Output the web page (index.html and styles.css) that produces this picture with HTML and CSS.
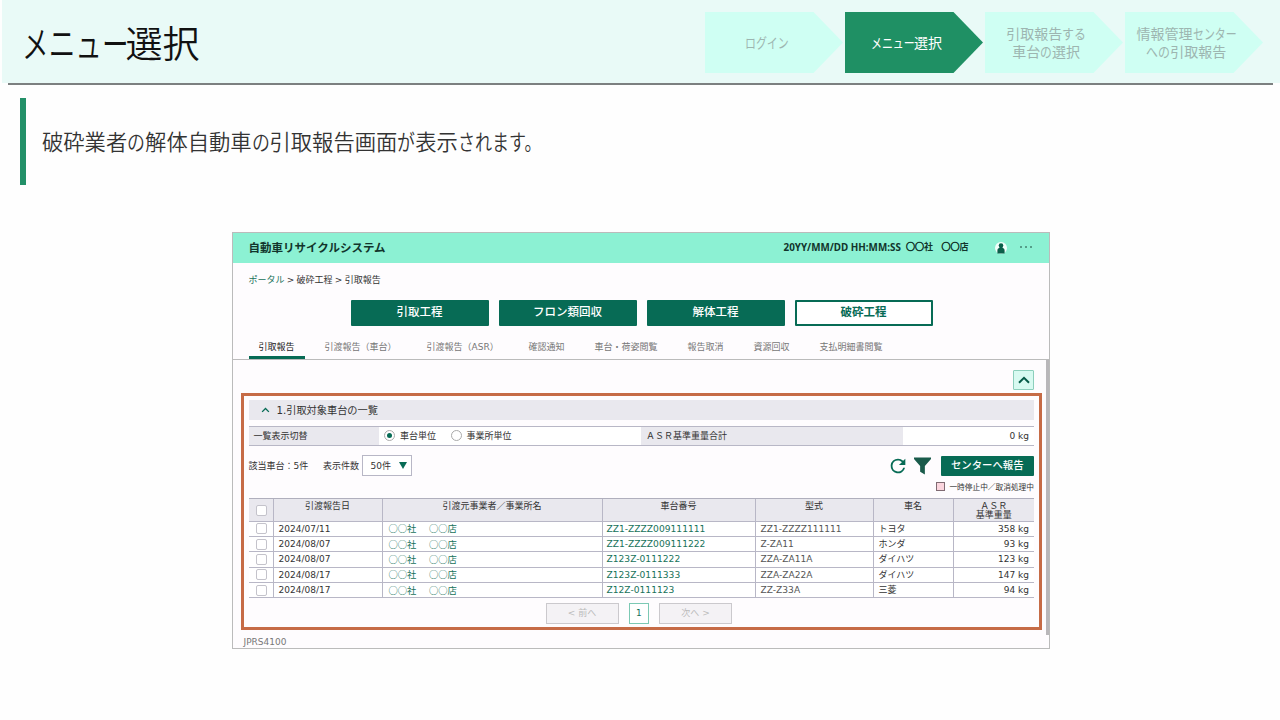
FILE: index.html
```html
<!DOCTYPE html>
<html lang="ja">
<head>
    <meta charset="UTF-8">
    <meta name="viewport" content="width=device-width, initial-scale=1.0">
    <title>メニュー選択</title>
    <link rel="stylesheet" href="styles.css">
</head>
<body>
    <header class="slide-header">
        <h1><span class="kana k4">メニュー</span>選択</h1>
        <ol class="steps">
            <li class="step"><span><span class="kana k4">ログイン</span></span></li>
            <li class="step active"><span><span class="kana k4">メニュー</span>選択</span></li>
            <li class="step"><span>引取報告<span class="kana k2">する</span><br>車台<span class="kana k1">の</span>選択</span></li>
            <li class="step"><span>情報管理<span class="kana k4">センター</span><br><span class="kana k2">への</span>引取報告</span></li>
        </ol>
    </header>

    <div class="lead">
        <p>破砕業者<span class="kana k1">の</span>解体自動車<span class="kana k1">の</span>引取報告画面<span class="kana k1">が</span>表示<span class="kana k5">されます。</span></p>
    </div>

    <div class="window">
        <div class="app-bar">
            <div class="app-title">自動車リサイクルシステム</div>
            <div class="app-time">20YY/MM/DD HH:MM:SS</div>
            <div class="app-company"><b>○○</b>社</div>
            <div class="app-shop"><b>○○</b>店</div>
            <svg class="user-icon" viewBox="0 0 12 12">
                <circle cx="6" cy="6" r="6" fill="#f2fffb"/>
                <circle cx="6" cy="3.6" r="2.3" fill="#0b5f4a"/>
                <path d="M4.600 5h2.800v.8c1.500.5 2.200 1.400 2.200 2.600V11.500H2.400V8.400c0-1.200.7-2.100 2.200-2.600z" fill="#0b5f4a"/>
            </svg>
            <svg class="more-icon" viewBox="0 0 12 4">
                <circle cx="1" cy="2" r=".8"/>
                <circle cx="6" cy="2" r=".8"/>
                <circle cx="11" cy="2" r=".8"/>
            </svg>
        </div>

        <div class="breadcrumb"><a>ポータル</a> &gt; 破砕工程 &gt; 引取報告</div>

        <div class="process">
            <div class="process-btn">引取工程</div>
            <div class="process-btn">フロン類回収</div>
            <div class="process-btn">解体工程</div>
            <div class="process-btn current">破砕工程</div>
        </div>

        <div class="tabs">
            <div class="tab current">引取報告</div>
            <div class="tab">引渡報告（車台）</div>
            <div class="tab tab-asr">引渡報告（ASR）</div>
            <div class="tab">確認通知</div>
            <div class="tab">車台・荷姿閲覧</div>
            <div class="tab">報告取消</div>
            <div class="tab">資源回収</div>
            <div class="tab">支払明細書閲覧</div>
        </div>

        <div class="page">
            <div class="content">
                <div class="top-row">
                    <div class="collapse">
                        <svg viewBox="0 0 12 8"><path d="M1 6.800L6 1.800L11 6.800"/></svg>
                    </div>
                </div>

                <section class="panel">
                    <div class="panel-title">
                        <svg viewBox="0 0 12 8"><path d="M1.500 6.500L6 2L10.500 6.500"/></svg>
                        <span>1.引取対象車台の一覧</span>
                    </div>

                    <div class="switch-row">
                        <div class="cell label-left">一覧表示切替</div>
                        <div class="cell radios">
                            <span class="radio on"></span><span class="radio-text">車台単位</span>
                            <span class="radio"></span><span class="radio-text">事業所単位</span>
                        </div>
                        <div class="cell label-right">ＡＳＲ基準重量合計</div>
                        <div class="cell total">0 kg</div>
                    </div>

                    <div class="tools">
                        <span class="count">該当車台：5件</span>
                        <span class="per-page">表示件数</span>
                        <div class="select">50件<i></i></div>
                        <svg class="reload" viewBox="0 0 24 24"><path d="M17.650 6.350A7.960 7.960 0 0 0 12 4a8 8 0 1 0 7.730 10h-2.080A6 6 0 1 1 12 6c1.660 0 3.140.690 4.220 1.780L13 11h7V4z"/></svg>
                        <svg class="filter" viewBox="0 0 18 18"><path d="M0 0h18v1.500L11.500 9v9L6.500 15V9L0 1.500z"/></svg>
                        <div class="report-btn">センターへ報告</div>
                    </div>

                    <div class="legend"><i></i><span>一時停止中／取消処理中</span></div>

                    <table class="list">
                        <colgroup>
                            <col class="c1"><col class="c2"><col class="c3"><col class="c4"><col class="c5"><col class="c6"><col class="c7">
                        </colgroup>
                        <thead>
                            <tr>
                                <th class="check-head"><span class="check"></span></th>
                                <th>引渡報告日</th>
                                <th>引渡元事業者／事業所名</th>
                                <th>車台番号</th>
                                <th>型式</th>
                                <th>車名</th>
                                <th>ＡＳＲ<br>基準重量</th>
                            </tr>
                        </thead>
                        <tbody>
                            <tr>
                                <td><span class="check"></span></td>
                                <td>2024/07/11</td>
                                <td class="link shop">○○社<span>○○店</span></td>
                                <td class="link">ZZ1-ZZZZ009111111</td>
                                <td class="model">ZZ1-ZZZZ111111</td>
                                <td>トヨタ</td>
                                <td class="weight">358 kg</td>
                            </tr>
                            <tr>
                                <td><span class="check"></span></td>
                                <td>2024/08/07</td>
                                <td class="link shop">○○社<span>○○店</span></td>
                                <td class="link">ZZ1-ZZZZ009111222</td>
                                <td class="model">Z-ZA11</td>
                                <td>ホンダ</td>
                                <td class="weight">93 kg</td>
                            </tr>
                            <tr>
                                <td><span class="check"></span></td>
                                <td>2024/08/07</td>
                                <td class="link shop">○○社<span>○○店</span></td>
                                <td class="link">Z123Z-0111222</td>
                                <td class="model">ZZA-ZA11A</td>
                                <td>ダイハツ</td>
                                <td class="weight">123 kg</td>
                            </tr>
                            <tr>
                                <td><span class="check"></span></td>
                                <td>2024/08/17</td>
                                <td class="link shop">○○社<span>○○店</span></td>
                                <td class="link">Z123Z-0111333</td>
                                <td class="model">ZZA-ZA22A</td>
                                <td>ダイハツ</td>
                                <td class="weight">147 kg</td>
                            </tr>
                            <tr>
                                <td><span class="check"></span></td>
                                <td>2024/08/17</td>
                                <td class="link shop">○○社<span>○○店</span></td>
                                <td class="link">Z12Z-0111123</td>
                                <td class="model">ZZ-Z33A</td>
                                <td>三菱</td>
                                <td class="weight">94 kg</td>
                            </tr>
                        </tbody>
                    </table>

                    <div class="pager">
                        <div class="pager-btn">&lt; 前へ</div>
                        <div class="pager-num">1</div>
                        <div class="pager-btn">次へ &gt;</div>
                    </div>
                </section>
            </div>
            <div class="scrollbar"></div>
        </div>

        <div class="screen-id">JPRS4100</div>
    </div>
</body>
</html>
```
FILE: styles.css
```css
* {
    box-sizing: border-box;
}

body {
    margin: 0;
    width: 1280px;
    height: 720px;
    overflow: hidden;
    background: #fefefe;
    color: #333;
    font-family: "Noto Sans CJK JP", sans-serif;
}

/* slide header */
.slide-header {
    display: flex;
    justify-content: space-between;
    height: 83px;
    margin-left: 2px;
    padding: 12px 17px 0 20px;
    background: #e9faf7;
}

.slide-header::after {
    content: "";
    position: absolute;
    left: 8px;
    top: 83px;
    width: 1265px;
    height: 2px;
    background: #7c8080;
}

h1 {
    margin: 0;
    padding-top: 1px;
    font-size: 37px;
    font-weight: 350;
    line-height: 58px;
    color: #111;
    white-space: nowrap;
}

/* narrow kana next to full width kanji */
.kana {
    display: inline-block;
    transform: scaleX(0.72);
    transform-origin: left;
    white-space: nowrap;
}

.k1 {
    width: 0.84em;
    transform: scaleX(0.84);
}

.k2 {
    width: 1.7em;
    transform: scaleX(0.85);
}

.k4 {
    width: 2.8em;
}

.step .k4 {
    width: 3.1em;
    transform: scaleX(0.78);
}

.k5 {
    width: 4em;
    transform: scaleX(0.8);
}

.steps {
    display: flex;
    gap: 1.5px;
    margin: 0;
    padding: 0;
    list-style: none;
}

.step {
    display: flex;
    align-items: center;
    justify-content: center;
    width: 138.5px;
    height: 61px;
    padding: 0 15px 2px 0;
    background: #cffff3;
    clip-path: polygon(0 0, 109px 0, 100% 50%, 109px 100%, 0 100%);
    color: #9db5b0;
    font-size: 14px;
    line-height: 18px;
    text-align: center;
    white-space: nowrap;
}

.step.active {
    background: #1f9064;
    color: #fff;
}

.lead {
    display: flex;
    align-items: center;
    width: 900px;
    height: 87px;
    margin: 15px 0 0 20px;
    padding: 0 0 2px 16px;
    border-left: 6px solid #239068;
}

.lead p {
    margin: 0;
    font-size: 21.3px;
    font-weight: 350;
    line-height: 30px;
    white-space: nowrap;
}

/* application window */
.window {
    width: 818px;
    height: 417px;
    margin: 46.500px 0 0 232px;
    border: 1px solid #bbb;
    background: #fefcfe;
    font-family: "DejaVu Sans", "Noto Sans CJK JP", sans-serif;
    font-size: 9px;
}

.app-bar {
    display: flex;
    align-items: center;
    height: 30px;
    padding: 0 0 2px 15.500px;
    background: #8cf1d3;
    color: #12352c;
    font-weight: bold;
    white-space: nowrap;
}

.app-title {
    width: 535px;
    font-size: 11.500px;
}

.app-time {
    width: 122.500px;
    font-family: "Noto Sans", sans-serif;
    font-size: 9.850px;
}

.app-company,
.app-shop {
    font-family: "Noto Sans CJK JP", sans-serif;
}

.app-company b,
.app-shop b {
    -webkit-text-stroke: 0.6px #12352c;
}

.app-company {
    width: 35.500px;
}

.app-shop {
    width: 53px;
}

.user-icon {
    width: 12px;
    height: 12px;
    margin-top: 2px;
}

.more-icon {
    width: 12px;
    height: 4px;
    margin-left: 13.500px;
    fill: #12352c;
}

.breadcrumb {
    height: 37px;
    padding: 8px 0 0 15.500px;
    line-height: 18px;
    word-spacing: -0.6px;
}

.breadcrumb a {
    color: #17725a;
}

.process {
    display: flex;
    gap: 10px;
    height: 37px;
    padding-left: 117.500px;
}

.process-btn {
    width: 138px;
    height: 26px;
    border: 2px solid #076b55;
    border-radius: 1px;
    background: #076b55;
    color: #fff;
    font-size: 11.500px;
    font-weight: 500;
    line-height: 20px;
    text-align: center;
}

.process-btn.current {
    background: #fff;
    color: #076b55;
    font-weight: bold;
}

.tabs {
    display: flex;
    gap: 10px;
    height: 23px;
    padding-left: 15.500px;
    border-bottom: 1px solid #bbb;
    color: #777;
    line-height: 20px;
    white-space: nowrap;
}

.tab {
    height: 22px;
    padding: 0 10px;
}

.tab.current {
    border-bottom: 3px solid #076b55;
    color: #222;
}

.tab-asr {
    width: 92px;
}

.page {
    display: flex;
    justify-content: space-between;
    height: 275px;
}

.content {
    width: 809px;
    padding-left: 8px;
}

.scrollbar {
    width: 3.500px;
    background: #b9b7ba;
}

.top-row {
    display: flex;
    justify-content: flex-end;
    height: 33px;
    padding: 10px 8px 0 0;
}

.collapse {
    display: flex;
    align-items: center;
    justify-content: center;
    width: 21px;
    height: 20px;
    border: 1px solid #8ccfbc;
    border-radius: 1px;
    background: #d8faf1;
}

.collapse svg {
    width: 12px;
    height: 8px;
    fill: none;
    stroke: #075b48;
    stroke-width: 2;
}

.panel {
    width: 801px;
    height: 237px;
    padding: 4px 5px 0 4.500px;
    border: 3px solid #c66b46;
}

.panel-title {
    display: flex;
    align-items: center;
    height: 20.500px;
    padding-left: 12px;
    background: #e9e8ee;
    font-size: 10.200px;
}

.panel-title svg {
    width: 9px;
    height: 6px;
    margin-right: 7px;
    fill: none;
    stroke: #076b55;
    stroke-width: 1.800;
}

.switch-row {
    display: flex;
    height: 20px;
    margin-top: 5.500px;
    border-top: 1px solid #b8b7c6;
    border-bottom: 1px solid #b8b7c6;
    background: #fff;
    line-height: 18px;
    white-space: nowrap;
}

.cell {
    flex: none;
}

.label-left {
    width: 130px;
    padding-left: 5px;
    background: #e9e8ee;
}

.radios {
    display: flex;
    align-items: center;
    width: 262.500px;
    padding-left: 5.500px;
}

.radio {
    display: flex;
    align-items: center;
    justify-content: center;
    width: 11px;
    height: 11px;
    border: 1px solid #aaa;
    border-radius: 50%;
    background: #fff;
}

.radio.on::after {
    content: "";
    width: 5px;
    height: 5px;
    border-radius: 50%;
    background: #076b55;
}

.radio-text {
    margin: 0 14.500px 0 5px;
}

.label-right {
    width: 262px;
    padding-left: 5px;
    background: #e9e8ee;
}

.total {
    width: 131px;
    padding-right: 5px;
    text-align: right;
}

.tools {
    display: flex;
    align-items: center;
    height: 20px;
    margin-top: 10px;
    white-space: nowrap;
}

.count {
    width: 74.500px;
}

.per-page {
    width: 38.500px;
}

.select {
    display: flex;
    align-items: center;
    width: 50.500px;
    height: 20.500px;
    padding-left: 8px;
    border: 1px solid #b8b7c6;
    background: #fff;
}

.select i {
    margin-left: 8.500px;
    border: 4px solid transparent;
    border-top: 7px solid #076b55;
    border-bottom: 0;
}

.reload {
    width: 22px;
    height: 22px;
    margin-left: auto;
    fill: #076b55;
}

.filter {
    width: 17px;
    height: 18px;
    margin: 0 10px 0 5px;
    fill: #1a5b4b;
}

.report-btn {
    width: 93.500px;
    height: 20px;
    border-radius: 1px;
    background: #076b55;
    color: #fff;
    font-size: 10.400px;
    font-weight: 500;
    line-height: 19px;
    text-align: center;
}

.legend {
    display: flex;
    align-items: center;
    justify-content: flex-end;
    height: 22px;
    font-size: 7.700px;
    white-space: nowrap;
}

.legend i {
    width: 9px;
    height: 9px;
    margin-right: 4px;
    border: 1px solid #806b73;
    background: #fbd5de;
}

/* vehicle list */
.list {
    width: 785.500px;
    border-collapse: separate;
    border-spacing: 0;
    border-top: 1px solid #b0afbd;
    table-layout: fixed;
    background: #fff;
}

.c1 { width: 25px; }
.c2 { width: 109px; }
.c3 { width: 220px; }
.c4 { width: 153px; }
.c5 { width: 118px; }
.c6 { width: 80px; }
.c7 { width: 80.500px; }

.list th,
.list td {
    padding: 0 5px;
    border-right: 1px solid #b8b7c6;
    border-bottom: 1px solid #b8b7c6;
    white-space: nowrap;
}

.list th:last-child,
.list td:last-child {
    border-right: 0;
}

.list th {
    height: 23px;
    padding-top: 3px;
    background: #e9e8ee;
    font-weight: normal;
    line-height: 9px;
    vertical-align: top;
}

.list td {
    height: 15.400px;
    line-height: 14px;
}

.list .link {
    color: #17725a;
    padding-left: 4px;
    font-size: 9.150px;
}

.list .shop {
    padding-left: 6px;
    font-family: "Noto Sans CJK JP", sans-serif;
    font-size: 9.300px;
    line-height: 13px;
}

.shop span {
    margin-left: 12.500px;
}

.list .model {
    color: #555;
    font-size: 9.100px;
}

.list .weight {
    text-align: right;
}

.list .check {
    display: block;
    width: 11px;
    height: 11px;
    margin-left: 2px;
    border: 1px solid #c4c3cb;
    border-radius: 2px;
    background: #fff;
}

.list .check-head {
    padding-top: 6px;
}

.pager {
    display: flex;
    justify-content: center;
    gap: 10px;
    margin: 5px 5px 0 0;
    line-height: 18px;
    text-align: center;
}

.pager-btn {
    width: 73px;
    height: 20.500px;
    border: 1px solid #cbc9cd;
    background: #f4f2f5;
    color: #bbb;
}

.pager-num {
    width: 20.500px;
    height: 20.500px;
    border: 1px solid #7cc9b4;
    background: #fff;
    color: #17725a;
}

.screen-id {
    padding-left: 10.500px;
    color: #777;
    line-height: 14px;
}
```
